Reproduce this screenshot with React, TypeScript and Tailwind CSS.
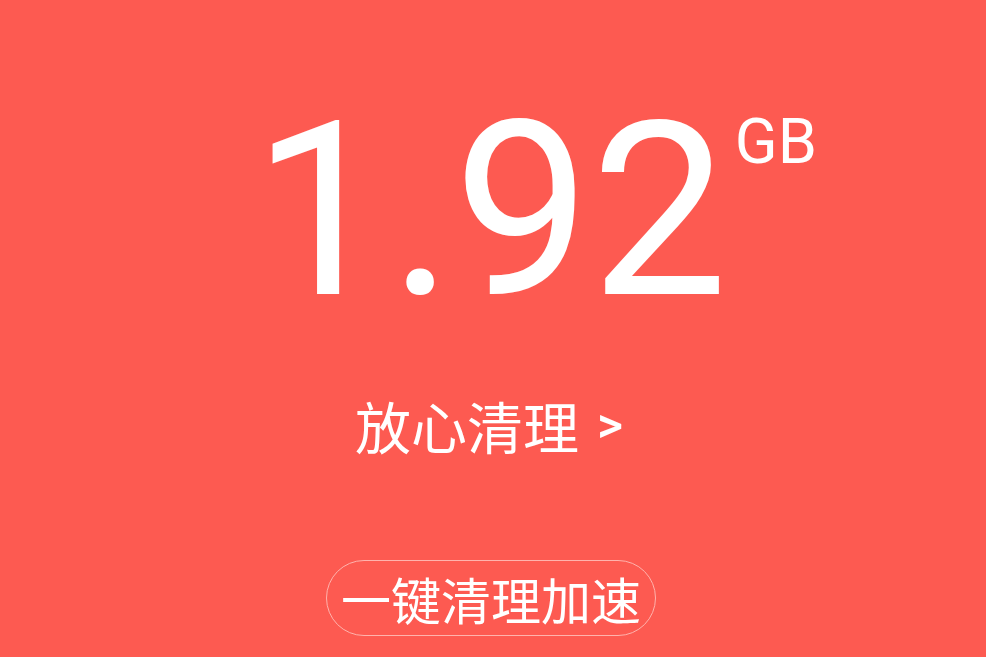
export default function App() {
  return (
    <div className="w-[986px] h-[657px] bg-[#fd5a51] overflow-hidden flex flex-col items-center text-white font-['Roboto','Noto_Sans_CJK_SC',sans-serif]">
      <div className="relative mt-[86px] ml-[-6px] h-[248px] flex items-start">
        <span className="text-[244px] leading-[250px] font-normal tracking-[0px]">1.92</span>
        <span className="absolute left-[100%] top-[26px] ml-[7px] text-[63px] leading-[60px] font-normal">GB</span>
      </div>
      <div className="mt-[56px] ml-[-8px] text-[56px] leading-[70px] flex items-center font-['Noto_Sans_CJK_SC',sans-serif]">
        放心清理
        <span className="ml-[18px] text-[50px] font-medium font-['Roboto',sans-serif]">&gt;</span>
      </div>
      <div className="mt-[100px] ml-[-4px] w-[330px] h-[76px] rounded-full border border-[#ffb3ad] flex items-center justify-center text-[50px] leading-[60px] font-['Noto_Sans_CJK_SC',sans-serif]">
        一键清理加速
      </div>
    </div>
  );
}
